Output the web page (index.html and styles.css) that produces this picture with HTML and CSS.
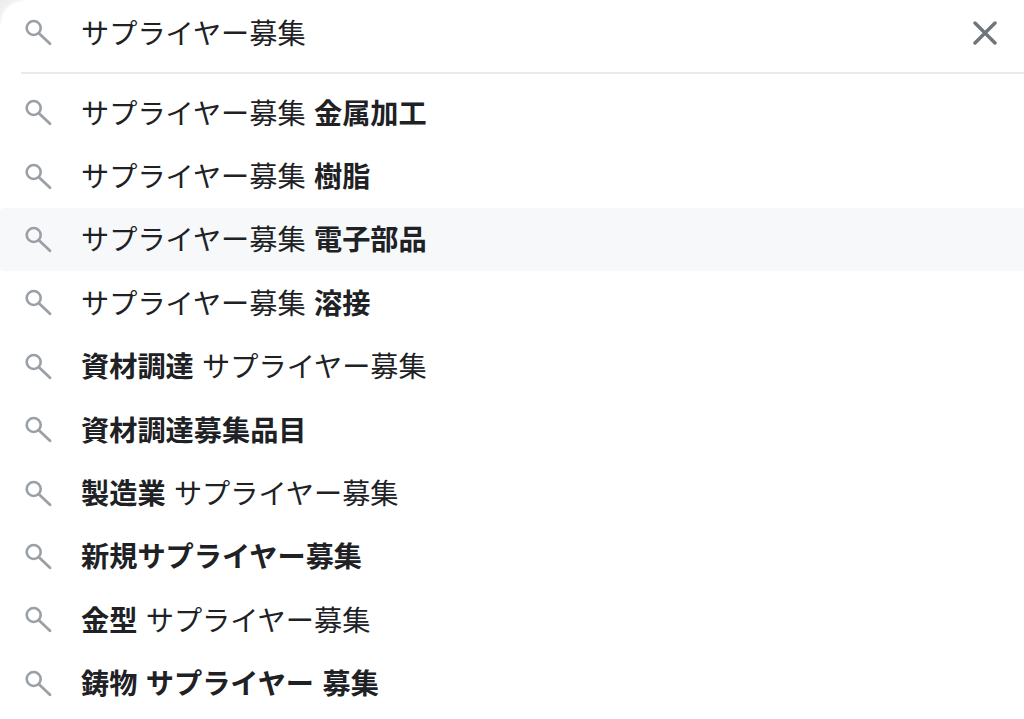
FILE: index.html
```html
<!DOCTYPE html>
<html lang="ja">
<head>
    <meta charset="UTF-8">
    <meta name="viewport" content="width=device-width, initial-scale=1.0">
    <title>サプライヤー募集</title>
    <link rel="stylesheet" href="styles.css">
</head>
<body>
    <svg class="icon-defs" width="0" height="0">
        <symbol id="search" viewBox="0 0 27 27">
            <circle cx="8.7" cy="9" r="7" fill="none" stroke="currentColor" stroke-width="2.6"/>
            <path d="M13.900 14.300L25 24.800" fill="none" stroke="currentColor" stroke-width="2.8" stroke-linecap="round"/>
        </symbol>
    </svg>
    <div class="search-box">
        <div class="search-header">
            <svg class="search-icon"><use href="#search"/></svg>
            <div class="search-input">サプライヤー募集</div>
            <svg class="clear-icon" viewBox="0 0 24 24" fill="none" stroke="currentColor" stroke-width="3.4" stroke-linecap="round">
                <path d="M2 2l20 20M22 2L2 22"/>
            </svg>
        </div>
        <ul class="suggestions">
            <li class="suggestion"><svg class="search-icon"><use href="#search"/></svg><span>サプライヤー募集 <b>金属加工</b></span></li>
            <li class="suggestion"><svg class="search-icon"><use href="#search"/></svg><span>サプライヤー募集 <b>樹脂</b></span></li>
            <li class="suggestion active"><svg class="search-icon"><use href="#search"/></svg><span>サプライヤー募集 <b>電子部品</b></span></li>
            <li class="suggestion"><svg class="search-icon"><use href="#search"/></svg><span>サプライヤー募集 <b>溶接</b></span></li>
            <li class="suggestion"><svg class="search-icon"><use href="#search"/></svg><span><b>資材調達</b> サプライヤー募集</span></li>
            <li class="suggestion"><svg class="search-icon"><use href="#search"/></svg><span><b>資材調達募集品目</b></span></li>
            <li class="suggestion"><svg class="search-icon"><use href="#search"/></svg><span><b>製造業</b> サプライヤー募集</span></li>
            <li class="suggestion"><svg class="search-icon"><use href="#search"/></svg><span><b>新規サプライヤー募集</b></span></li>
            <li class="suggestion"><svg class="search-icon"><use href="#search"/></svg><span><b>金型</b> サプライヤー募集</span></li>
            <li class="suggestion"><svg class="search-icon"><use href="#search"/></svg><span><b>鋳物 サプライヤー 募集</b></span></li>
        </ul>
    </div>
</body>
</html>
```
FILE: styles.css
```css
* {
    margin: 0;
    padding: 0;
    box-sizing: border-box;
}

body {
    background: #fff;
    color: #202124;
    font-family: "Noto Sans CJK JP", "Noto Sans", sans-serif;
    font-size: 28.2px;
    word-spacing: 2px;
    height: 100vh;
    overflow: hidden;
}

.icon-defs {
    position: absolute;
}

.search-box {
    position: relative;
}

/* shadow of the rounded box, only the corner is in frame */
.search-box::before {
    content: "";
    position: absolute;
    top: 0;
    left: 0;
    width: 24px;
    height: 24px;
    background: radial-gradient(circle at 24px 24px, rgba(255, 255, 255, 0) 22px, #f1f1f1 25px, #ececec 34px);
}

.search-header {
    height: 74px;
    margin-left: 21px;
    padding: 0 27px 7px 0;
    border-bottom: 2px solid #e8eaed;
    display: flex;
    align-items: center;
}

.search-header .search-icon {
    margin-left: 4px;
}

.search-icon {
    width: 27px;
    height: 27px;
    flex-shrink: 0;
    color: #9aa0a6;
}

.search-input {
    flex: 1;
    margin-left: 29px;
    padding-bottom: 2px;
    line-height: 40px;
}

.clear-icon {
    width: 24px;
    height: 24px;
    margin-top: 1px;
    color: #70757a;
}

.suggestions {
    list-style: none;
    padding-top: 7px;
}

.suggestion {
    height: 63.4px;
    padding-left: 25px;
    display: flex;
    align-items: center;
    white-space: pre;
}

.suggestion span {
    margin-left: 29px;
    padding-bottom: 2px;
    line-height: 40px;
}

.suggestion b {
    font-weight: 700;
}

.active {
    background: #f6f8fa;
    border-radius: 4px 0 0 4px;
}
```
